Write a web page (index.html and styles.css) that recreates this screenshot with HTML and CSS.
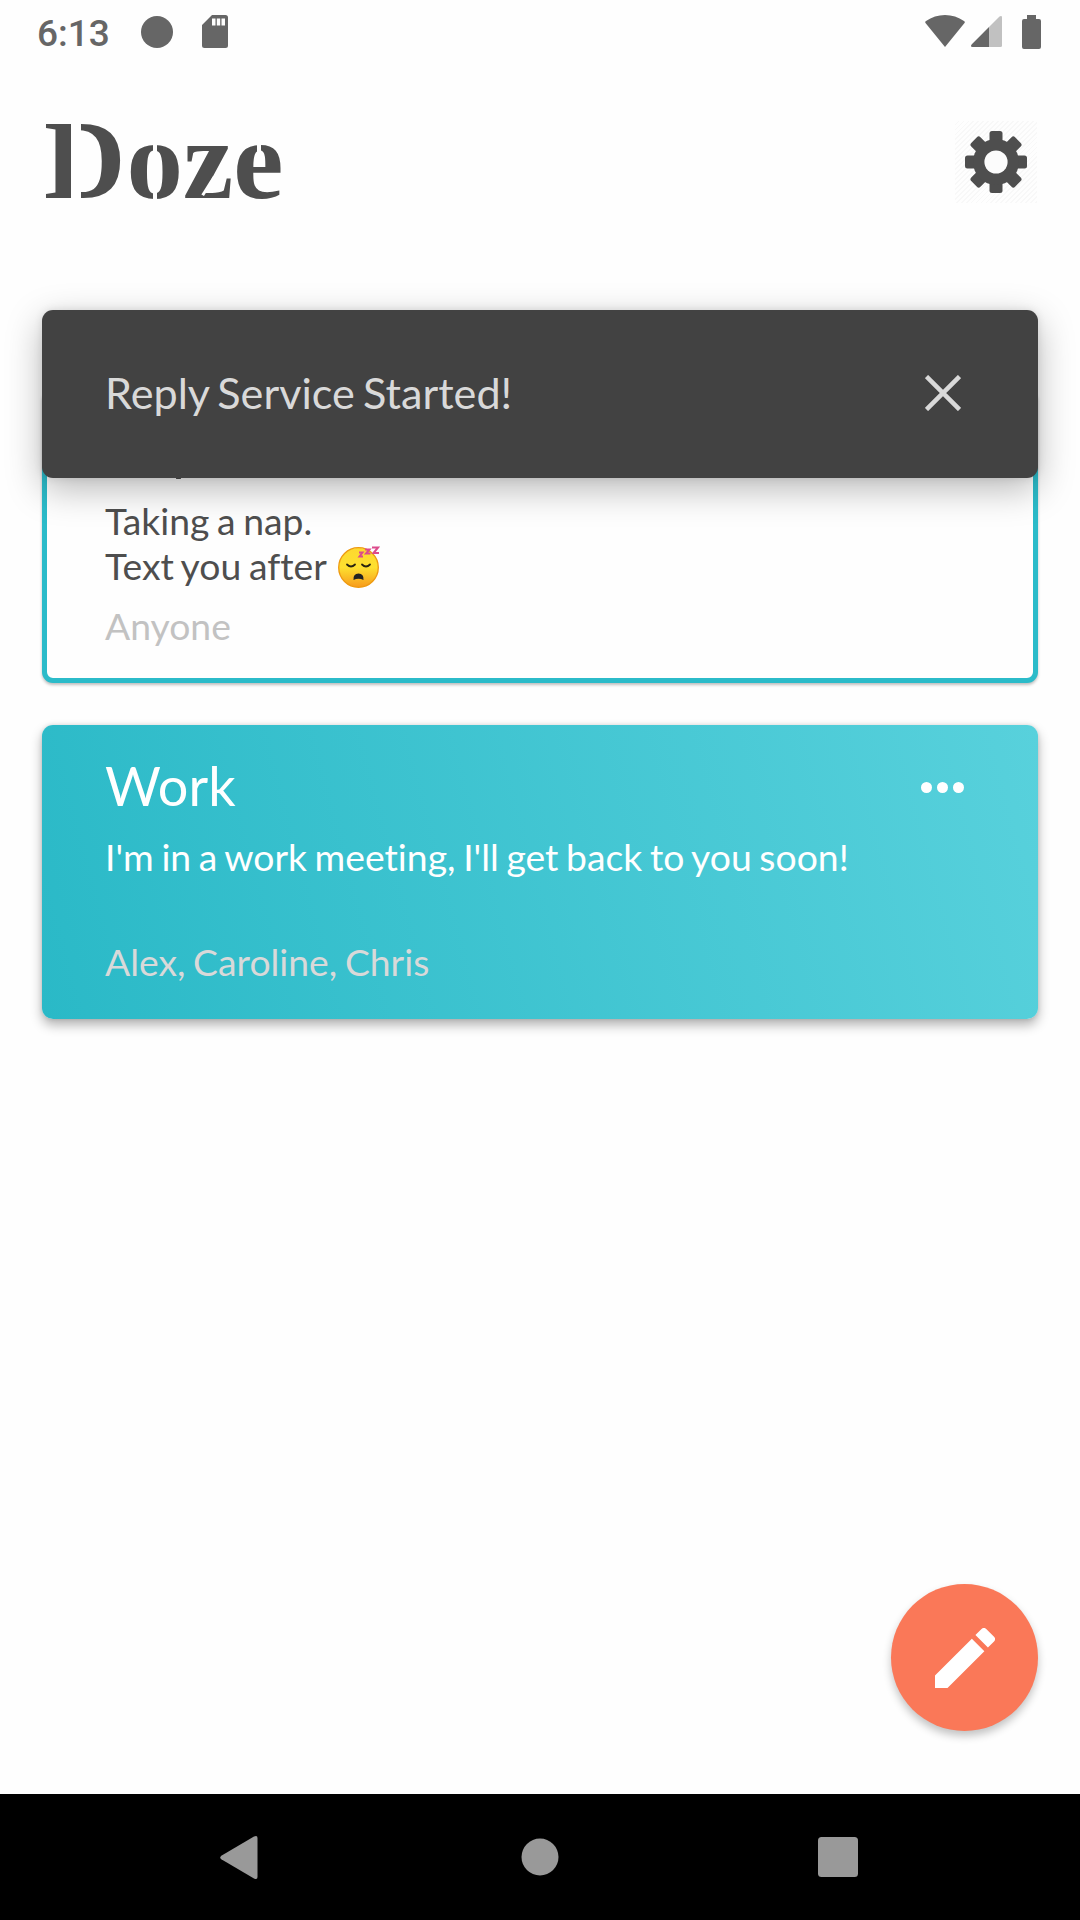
FILE: index.html
```html
<!DOCTYPE html>
<html lang="en">
<head>
<meta charset="utf-8">
<title>Doze</title>
<link rel="stylesheet" href="styles.css">
</head>
<body>
<div class="screen">
  <header class="status">
    <span class="clock">6:13</span>
    <svg class="status-dot" viewBox="0 0 32 32"><circle cx="16" cy="16" r="16"/></svg>
    <svg class="status-sd" viewBox="0 0 26 33"><path fill-rule="evenodd" d="M10 0H23.5Q26 0 26 2.500V30.500Q26 33 23.500 33H2.500Q0 33 0 30.500V10ZM10 3.500V10.500H13.500V3.500ZM14.800 3.500V10.500H18.200V3.500ZM19.500 3.500V10.500H23V3.500Z"/></svg>
    <div class="status-right">
      <svg class="wifi" viewBox="0 0 40 32"><path d="M20 32 0.500 8Q-.2 6.800 1 6Q9.500 0 20 0T39 6Q40.300 6.800 39.500 8Z"/></svg>
      <svg class="signal" viewBox="0 0 31 31"><path opacity=".4" d="M18 11 28.500.6Q31-1 31 1.500V29.500Q31 31 29.500 31H18Z"/><path d="M18 11V31H1.500Q-1 31 .6 28.500Z"/></svg>
      <svg class="battery" viewBox="0 0 19 34"><path d="M5 0H14V4H17Q19 4 19 6V32Q19 34 17 34H2Q0 34 0 32V6Q0 4 2 4H5Z"/></svg>
    </div>
  </header>

  <div class="appbar">
    <h1 class="logo"><span class="l-d">D</span><span class="l-o">o</span><span class="l-z">z</span><span class="l-e">e</span></h1>
    <button class="settings" aria-label="Settings">
      <svg viewBox="-31 -31 62 62">
        <g id="teeth">
          <rect x="-6.500" y="-31" width="13" height="62" rx="2.500"/>
          <rect x="-6.500" y="-31" width="13" height="62" rx="2.500" transform="rotate(45)"/>
          <rect x="-6.500" y="-31" width="13" height="62" rx="2.500" transform="rotate(90)"/>
          <rect x="-6.500" y="-31" width="13" height="62" rx="2.500" transform="rotate(135)"/>
        </g>
        <circle r="23"/>
        <circle class="hole" r="11.600"/>
      </svg>
    </button>
  </div>

  <main class="list">
    <article class="card card-outline">
      <h2 class="title">Nap</h2>
      <p class="message">Taking a nap.<br>Text you after <svg class="emoji" viewBox="0 0 42 42" role="img" aria-label="sleeping face">
        <defs><linearGradient id="face" x1="0" y1="0" x2="0" y2="1"><stop offset="0" stop-color="#fdd92f"/><stop offset=".5" stop-color="#fee02f"/><stop offset="1" stop-color="#f79a1c"/></linearGradient></defs>
        <circle cx="20.500" cy="21.500" r="19.800" fill="url(#face)" stroke="#ee9a10" stroke-width="1.300"/>
        <path d="M9 18.500Q13 22.500 17 18.500M24 18.500Q28 22.500 32 18.500" fill="none" stroke="#2a2410" stroke-width="1.800" stroke-linecap="round"/>
        <path d="M15.500 34Q15 27.500 20.500 27.500T25.500 34Q20.500 31.500 15.500 34Z" fill="#222"/>
        <path d="M21 6.500H24.500L21.500 10.500H25M27 3.500H31.500L28 7.500H32.500M34 1.500H40L35.500 7H41" fill="none" stroke="#dc4b8c" stroke-width="2"/>
      </svg></p>
      <p class="people">Anyone</p>
    </article>

    <article class="card card-filled">
      <div class="card-head">
        <h2 class="title">Work</h2>
        <svg class="more" viewBox="0 0 43 11"><circle cx="5.500" cy="5.500" r="5.500"/><circle cx="21.500" cy="5.500" r="5.500"/><circle cx="37.500" cy="5.500" r="5.500"/></svg>
      </div>
      <p class="message">I'm in a work meeting, I'll get back to you soon!</p>
      <p class="people">Alex, Caroline, Chris</p>
    </article>
  </main>

  <div class="toast" role="status">
    <span>Reply Service Started!</span>
    <svg class="close" viewBox="0 0 36 36"><path d="M1.500 1.500 34.500 34.500M34.500 1.500 1.500 34.500"/></svg>
  </div>

  <button class="fab" aria-label="New reply">
    <svg viewBox="0 0 18 18"><path d="M0 14.250V18H3.750L14.810 6.940 11.060 3.190ZM17.710 4.040A1 1 0 0 0 17.710 2.630L15.370.290A1 1 0 0 0 13.960.290L12.130 2.120 15.880 5.870Z"/></svg>
  </button>

  <nav class="navbar">
    <svg class="nav-back" viewBox="0 0 38 43"><path d="M34 .6Q37.500-1 37.500 2V41Q37.500 44 34 42.400L1.300 23.300Q-.8 21.500 1.300 19.700Z"/></svg>
    <svg class="nav-home" viewBox="0 0 38 38"><circle cx="19" cy="19" r="18.500"/></svg>
    <svg class="nav-recent" viewBox="0 0 40 40"><rect width="40" height="40" rx="3.500"/></svg>
  </nav>
</div>
</body>
</html>
```
FILE: styles.css
```css
* { box-sizing: border-box; margin: 0; padding: 0; }

body {
  width: 1080px;
  height: 1920px;
  overflow: hidden;
  background: #fefefe;
  font-family: Lato, "Liberation Sans", sans-serif;
  font-variant-ligatures: none;
  color: #4e4e4e;
}

svg { display: block; }
button { border: 0; font: inherit; }

.screen {
  position: relative;
  display: flex;
  flex-direction: column;
  height: 1920px;
}

/* status bar */
.status {
  display: flex;
  align-items: center;
  height: 63px;
  padding: 0 39px 0 37px;
  color: #666;
  fill: #666;
}
.clock {
  width: 104px;
  padding-top: 3px;
  font: 500 37px/63px Roboto, sans-serif;
}
.status-dot { width: 32px; height: 32px; }
.status-sd { width: 26px; height: 33px; margin-left: 29px; }
.status-right {
  display: flex;
  align-items: center;
  margin-left: auto;
}
.wifi { width: 40px; height: 32px; margin-top: -2px; }
.signal { width: 31px; height: 31px; margin-left: 6px; }
.battery { width: 19px; height: 34px; margin-left: 20px; }

/* app bar */
.appbar {
  display: flex;
  justify-content: space-between;
  align-items: flex-start;
  height: 326px;
  padding: 58px 43px 0 44px;
}
.logo {
  display: flex;
  margin-top: -2px;
  font: 700 113px/82px "Liberation Serif", serif;
}
.logo span { position: relative; }
.logo span::after {
  content: "";
  position: absolute;
  background: #fefefe;
}
.logo .l-d::after { left: 27px; top: 0; width: 10px; height: 82px; }
.logo .l-o { margin-left: 1px; }
.logo .l-o::after { left: 26px; top: 15px; width: 4px; height: 66px; }
.logo .l-z::after { left: 24px; top: 56px; width: 3px; height: 22px; transform: rotate(32deg); }
.logo .l-e::after { left: 24px; top: 20px; width: 4px; height: 14px; }
.settings {
  display: flex;
  align-items: center;
  justify-content: center;
  width: 82px;
  height: 82px;
  background: repeating-linear-gradient(135deg, #fefefe 0 2.200px, #f8f8f8 2.200px 3.500px);
}
.settings svg { width: 62px; height: 62px; fill: #4e4e4e; }
.settings .hole { fill: #fcfcfc; }

/* cards */
.list {
  display: flex;
  flex-direction: column;
  gap: 42px;
  padding: 0 42px;
}
.card {
  height: 294px;
  border-radius: 11px;
  padding: 29px 63px;
}
.card-outline {
  padding: 24px 58px;
  background: #fefefe;
  border: 5px solid #2bbbc9;
  box-shadow: 0 2px 3px rgba(0, 0, 0, .25);
}
.card-filled {
  color: #fff;
  background: linear-gradient(75deg, #2ab9c7, #58d1dc);
  box-shadow: 0 6px 12px rgba(0, 0, 0, .3), 0 0 4px rgba(0, 0, 0, .12);
}
.card-head {
  display: flex;
  align-items: center;
  justify-content: space-between;
}
.title { font-size: 54px; font-weight: 400; line-height: 64px; }
.more { width: 43px; height: 11px; margin: 2px 11px 0 0; fill: #fff; }
.message,
.people { font-size: 37.300px; line-height: 45px; word-spacing: -1.900px; }
.message { height: 89px; margin-top: 16px; }
.people { margin-top: 16px; }
.card-outline .people { color: #c2c2c2; }
.card-filled .people { color: #d9d9d9; }
.emoji { display: inline-block; width: 42px; height: 42px; margin-left: 4px; vertical-align: -8px; }

/* toast over the list */
.toast {
  position: absolute;
  left: 42px;
  right: 42px;
  top: 310px;
  height: 168px;
  display: flex;
  align-items: center;
  justify-content: space-between;
  padding: 0 77px 2px 63px;
  border-radius: 11px;
  background: #424242;
  color: #d9d9d9;
  font-size: 43.200px;
  word-spacing: -2.800px;
  box-shadow: 0 11px 36px rgba(0, 0, 0, .28), 0 0 8px rgba(0, 0, 0, .1);
}
.toast span { padding-bottom: 2px; }
.close { width: 36px; height: 36px; fill: none; stroke: #d9d9d9; stroke-width: 4.500; }

/* floating action button */
.fab {
  position: absolute;
  right: 42px;
  top: 1584px;
  width: 147px;
  height: 147px;
  display: flex;
  align-items: center;
  justify-content: center;
  border-radius: 50%;
  background: #fa7858;
  box-shadow: 0 5px 9px rgba(0, 0, 0, .24);
}
.fab svg { width: 60px; height: 60px; fill: #fff; }

/* system navigation */
.navbar {
  display: flex;
  align-items: center;
  justify-content: space-between;
  height: 126px;
  margin-top: auto;
  padding: 0 222px 0 220px;
  background: #000;
  fill: #999;
}
.nav-back { width: 38px; height: 43px; }
.nav-home { width: 38px; height: 38px; margin-left: 3px; }
.nav-recent { width: 40px; height: 40px; }
```
